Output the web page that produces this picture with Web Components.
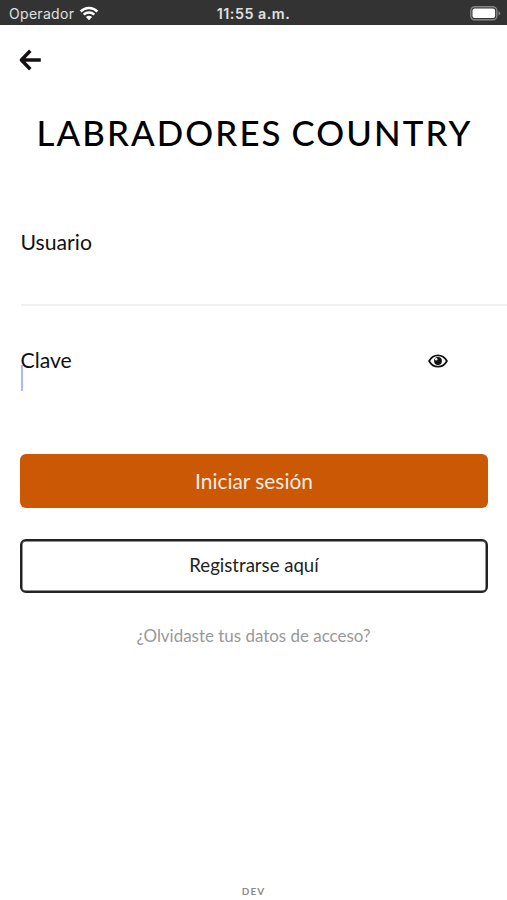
<!DOCTYPE html>
<html lang="es">
<head>
<meta charset="utf-8">
<title>Labradores Country</title>
<style>
html, body { margin: 0; background: #fff; }
body { font-family: Lato, "Open Sans", sans-serif; color: #111; }
</style>
</head>
<body>
<login-screen></login-screen>
<script>
const define = (name, html) => {
  const template = document.createElement('template');
  template.innerHTML = html;
  customElements.define(name, class extends HTMLElement {
    constructor() {
      super();
      this.attachShadow({ mode: 'open' }).append(template.content.cloneNode(true));
    }
  });
};

define('status-bar', `
<style>
:host { display: grid; grid-template-columns: 1fr auto 1fr; align-items: center; height: 25px; box-sizing: border-box;
  padding: 2px 6px 0 9px; background: #333; color: #e0e0e0; font: 14px/20px Inter, Roboto, sans-serif; }
.left { display: flex; align-items: center; gap: 5px; }
.carrier { letter-spacing: .3px; }
.time { font-weight: 600; font-size: 14.300px; letter-spacing: .5px; margin-left: -3px; }
.battery { justify-self: end; }
svg { display: block; }
</style>
<div class="left"><span class="carrier">Operador</span>
<svg width="20" height="15" viewBox="0 0 20 15" fill="none" stroke="#fff" stroke-width="2.500"><path d="M1.600 5.500C6.400.9 13.600.9 18.400 5.500M4.700 8.700C7.700 5.900 12.300 5.900 15.300 8.700"/><path d="M6.900 11.100Q10 8.300 13.100 11.100L10 14.300Z" fill="#fff" stroke="none"/></svg></div>
<span class="time">11:55 a.m.</span>
<svg class="battery" width="31" height="15" viewBox="0 0 31 15"><rect x=".8" y=".8" width="26" height="13" rx="3.800" fill="none" stroke="#858585" stroke-width="1.400"/><rect x="2.500" y="2.500" width="22.600" height="9.600" rx="2" fill="#fff"/><path d="M28.500 5Q32 7.300 28.500 9.600Z" fill="#858585"/></svg>
`);

define('back-button', `
<style>:host { display: block; width: 24px; height: 24px; } svg { display: block; }</style>
<svg width="24" height="24" viewBox="0 0 24 24" fill="none" stroke="#151113" stroke-width="3.500"><path d="M12.300 2.800L3.400 12L12.300 21.200M3.800 12H22.800" stroke-linejoin="round"/></svg>
`);

define('form-field', `
<style>
:host { display: flex; justify-content: space-between; box-sizing: border-box; position: relative; font-size: 21.200px; line-height: 26px; }
</style>
<slot></slot><slot name="action"></slot>
`);

define('text-cursor', `
<style>:host { display: block; position: absolute; left: 0; top: 18px; width: 2.500px; height: 26px; background: #adb9f5; }</style>
`);

define('eye-icon', `
<style>:host { display: block; } svg { display: block; }</style>
<svg width="20" height="14" viewBox="0 0 20 14"><path d="M1.100 7C5.200-.6 14.800-.6 18.900 7C14.800 14.600 5.200 14.600 1.100 7Z" fill="#fff" stroke="#111" stroke-width="1.800" stroke-linejoin="round"/><circle cx="10" cy="7" r="3.900" fill="#111"/><circle cx="8.200" cy="5.200" r="1.200" fill="#fff"/></svg>
`);

define('app-button', `
<style>
:host { display: flex; align-items: center; justify-content: center; box-sizing: border-box; height: 54px; padding-bottom: 1px; border-radius: 6px;
  background: #ca5805; color: #fbebe0; font-size: 20.900px; line-height: 26px; }
:host([outline]) { background: #fff; border: 2px solid #222; box-shadow: inset 0 0 0 .5px #222; color: #222; font-size: 18.600px; padding-bottom: 2px; }
</style>
<slot></slot>
`);

define('login-screen', `
<style>
:host { display: flex; flex-direction: column; height: 900px; background: #fff; }
status-bar { flex: none; }
back-button { margin: 23px 0 0 18px; }
h1 { margin: 40px 0 0; padding-left: 2px; text-align: center; font-weight: 500; font-size: 34.800px; line-height: 42px; letter-spacing: 2.100px; word-spacing: -2px; color: #000; white-space: nowrap; }
.user { margin: 75px 0 0 20.500px; height: 77px; border-bottom: 2px solid #f0f0f0; }
.pass { margin: 41px 59px 0 20.500px; height: 54px; }
eye-icon { margin-top: 7px; }
.actions { margin: 53px 19px 0 20px; display: grid; gap: 31px; }
.forgot { margin-top: 31px; text-align: center; font-size: 16.950px; line-height: 24px; color: #999; }
.env { margin: auto 0 3px; text-align: center; font-size: 10px; line-height: 12px; font-weight: 700; letter-spacing: 1px; color: #8c8c8c; }
</style>
<status-bar></status-bar>
<back-button></back-button>
<h1>LABRADORES COUNTRY</h1>
<form-field class="user"><span>Usuario</span></form-field>
<form-field class="pass"><span>Clave</span><text-cursor></text-cursor><eye-icon slot="action"></eye-icon></form-field>
<div class="actions"><app-button>Iniciar sesión</app-button><app-button outline>Registrarse aquí</app-button></div>
<div class="forgot">¿Olvidaste tus datos de acceso?</div>
<div class="env">DEV</div>
`);
</script>
</body>
</html>
